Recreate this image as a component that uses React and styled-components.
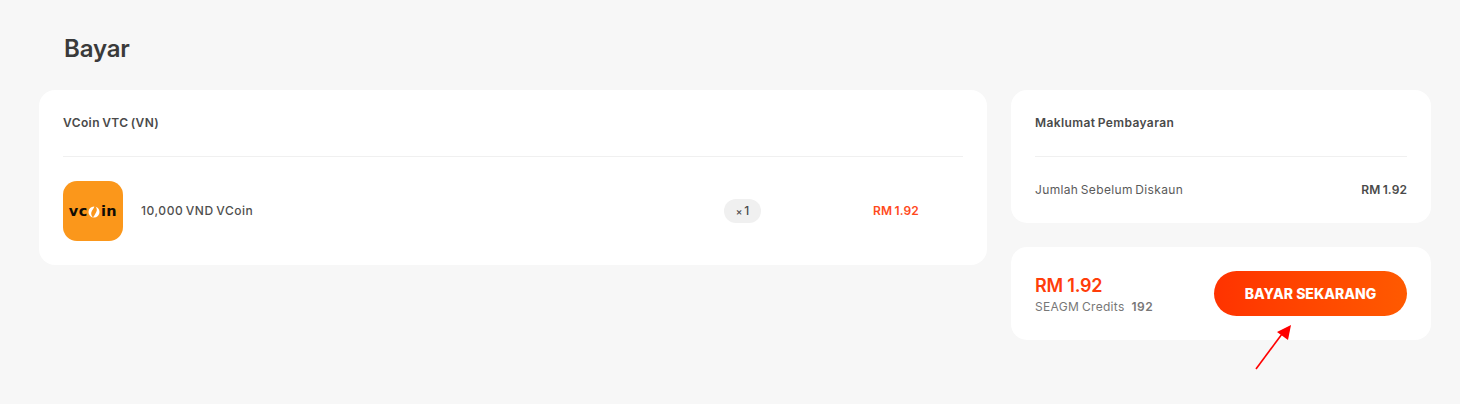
import React from 'react'
import styled, { createGlobalStyle } from 'styled-components'

const Global = createGlobalStyle`
  html, body { margin: 0; padding: 0; background: #f7f7f7; }
  body { font-family: "Inter", "Noto Sans", sans-serif; }
`

const Page = styled.div`
  position: relative;
  height: 404px;
  box-sizing: border-box;
  padding: 0 29px 0 39px;
  overflow: hidden;
`
const Title = styled.h1`
  margin: 0;
  height: 90px;
  padding: 34px 0 0 25px;
  box-sizing: border-box;
  font-size: 24px;
  line-height: 30px;
  font-weight: 600;
  letter-spacing: -0.15px;
  color: #3a3a3a;
`
const Columns = styled.div`
  display: flex;
  align-items: flex-start;
  gap: 24px;
`
const Left = styled.div`
  width: 948px;
  flex: none;
`
const Right = styled.div`
  width: 420px;
  flex: none;
  display: flex;
  flex-direction: column;
  gap: 24px;
`
const Card = styled.section`
  background: #fff;
  border-radius: 16px;
  padding: 0 24px;
`
const CardHead = styled.div`
  height: 67px;
  box-sizing: border-box;
  padding-bottom: 2px;
  display: flex;
  align-items: center;
  border-bottom: 1px solid #f0f0f0;
  font-size: 12px;
  font-weight: 600;
  letter-spacing: 0.4px;
  word-spacing: -1.2px;
  color: #4a4a4a;
`
const Product = styled.div`
  display: flex;
  align-items: center;
  padding: 24px 0;
`
const Logo = styled.div`
  width: 60px;
  height: 60px;
  border-radius: 14px;
  background: #fb971b;
  display: flex;
  align-items: center;
  justify-content: center;
  font-family: "DejaVu Sans", sans-serif;
  font-size: 14.5px;
  font-weight: 700;
  letter-spacing: 0.5px;
  color: #0f0b05;
  flex: none;

  svg { margin: 0 1px 0 0; }
`
const ProductName = styled.div`
  margin-left: 18px;
  width: 583px;
  padding-bottom: 2px;
  font-size: 12px;
  font-weight: 500;
  letter-spacing: 0.55px;
  word-spacing: -1.2px;
  color: #4f4f4f;
`
const Qty = styled.div`
  width: 37px;
  height: 24px;
  box-sizing: border-box;
  padding-bottom: 1px;
  border-radius: 12px;
  background: #f0f0f0;
  display: flex;
  align-items: center;
  justify-content: center;
  font-size: 12px;
  font-weight: 500;
  color: #4a4a4a;
  flex: none;

  small { font-size: 10px; margin-right: 2px; }
`
const LinePrice = styled.div`
  margin-left: 112px;
  padding-bottom: 2px;
  font-size: 12px;
  font-weight: 600;
  word-spacing: -0.6px;
  letter-spacing: 0.1px;
  color: #ff4a1c;
  white-space: nowrap;
`
const InfoRow = styled.div`
  height: 66px;
  box-sizing: border-box;
  padding-bottom: 2px;
  display: flex;
  align-items: center;
  justify-content: space-between;
  font-size: 12px;
  letter-spacing: 0.35px;
  word-spacing: -1.2px;
  color: #5a5a5a;

  b { font-weight: 600; color: #4a4a4a; letter-spacing: 0.1px; word-spacing: -0.8px; }
`
const PayCard = styled(Card)`
  height: 93px;
  display: flex;
  align-items: center;
  justify-content: space-between;
`
const Summary = styled.div`
  padding-top: 2px;
`
const Total = styled.div`
  font-size: 18px;
  line-height: 22px;
  font-weight: 600;
  letter-spacing: -0.2px;
  color: #ff3d0a;
`
const Credits = styled.div`
  margin-top: 2px;
  font-size: 12px;
  line-height: 16px;
  letter-spacing: 0.3px;
  word-spacing: -0.8px;
  color: #777;

  b { font-weight: 600; margin-left: 4px; letter-spacing: 0.5px; }
`
const PayButton = styled.button`
  width: 193px;
  height: 45px;
  border: 0;
  border-radius: 23px;
  background: linear-gradient(90deg, #ff3300, #ff5a00);
  color: #fff;
  font-family: inherit;
  font-size: 14px;
  font-weight: 800;
  letter-spacing: 0;
`
const Arrow = styled.svg`
  position: absolute;
  left: 1250px;
  top: 320px;
`

export default function App() {
  return (
    <Page>
      <Global />
      <Title>Bayar</Title>
      <Columns>
        <Left>
          <Card>
            <CardHead>VCoin VTC (VN)</CardHead>
            <Product>
              <Logo>
                vc
                <svg width="12" height="14" viewBox="0 0 12 14">
                  <circle cx="6" cy="8" r="5.5" fill="#fff" />
                  <path d="M6.5 1 C9 4 9.5 6 8 8.5 C7 10.5 6 12 5 13.5 C2.5 11 3 8 4.5 6 C5.6 4.5 6.5 3 6.5 1Z" fill="#fb971b" />
                </svg>
                in
              </Logo>
              <ProductName>10,000 VND VCoin</ProductName>
              <Qty><small>×</small>1</Qty>
              <LinePrice>RM 1.92</LinePrice>
            </Product>
          </Card>
        </Left>
        <Right>
          <Card>
            <CardHead>Maklumat Pembayaran</CardHead>
            <InfoRow>
              <span>Jumlah Sebelum Diskaun</span>
              <b>RM 1.92</b>
            </InfoRow>
          </Card>
          <PayCard>
            <Summary>
              <Total>RM 1.92</Total>
              <Credits>SEAGM Credits <b>192</b></Credits>
            </Summary>
            <PayButton>BAYAR SEKARANG</PayButton>
          </PayCard>
        </Right>
      </Columns>
      <Arrow width="46" height="54" viewBox="0 0 46 54">
        <line x1="6" y1="49" x2="32" y2="14" stroke="#ff0000" strokeWidth="1.6" />
        <polygon points="41,5 27,12 38,20" fill="#ff0000" />
      </Arrow>
    </Page>
  )
}
